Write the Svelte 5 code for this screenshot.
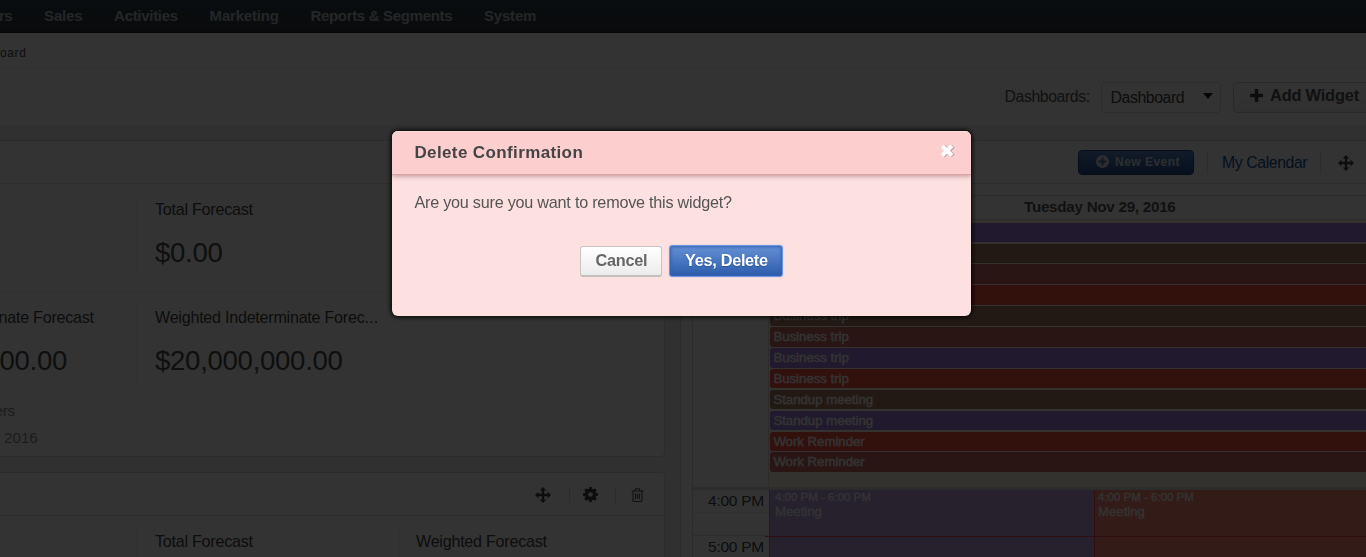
<script>
  const menu = [
    ['Sales', ''],
    ['Activities', 'close'],
    ['Marketing', ''],
    ['Reports & Segments', 'tight'],
    ['System', '']
  ];
  const events = [
    ['purple', ''],
    ['brown', ''],
    ['maroon', ''],
    ['red', ''],
    ['brown', 'Business trip'],
    ['maroon', 'Business trip'],
    ['purple', 'Business trip'],
    ['red', 'Business trip'],
    ['brown', 'Standup meeting'],
    ['purple', 'Standup meeting'],
    ['red', 'Work Reminder'],
    ['maroon', 'Work Reminder']
  ];
</script>

{#snippet move()}
  <svg class="move" viewBox="0 0 16 16" width="16" height="16"><path d="M8 0l3.4 3.5H9.2v3.3h3.3V4.6L16 8l-3.5 3.4V9.2H9.2v3.3h2.2L8 16l-3.4-3.5h2.2V9.2H3.5v2.2L0 8l3.5-3.4v2.2h3.3V3.5H4.6z" /></svg>
{/snippet}

<div class="page">
  <nav>
    <span class="first">rs</span>
    {#each menu as [item, cls]}<span class="item {cls}">{item}</span>{/each}
  </nav>
  <div class="crumb"><span>oard</span></div>
  <header>
    <span class="label">Dashboards:</span>
    <div class="select"><span>Dashboard</span><i></i></div>
    <div class="add">
      <svg viewBox="0 0 12 12" width="13" height="13"><path d="M4.4 0h3.2v4.4H12v3.2H7.6V12H4.4V7.6H0V4.4h4.4z" /></svg>
      <span>Add Widget</span>
    </div>
  </header>
  <main>
    <section class="left">
      <div class="widget one">
        <div class="whead"></div>
        <div class="row r1">
          <div class="cell c1"></div>
          <div class="cell c2"><p>Total Forecast</p><b>$0.00</b></div>
        </div>
        <div class="row r2">
          <div class="cell c1"><p>nate Forecast</p><b>00.00</b></div>
          <div class="cell c2"><p>Weighted Indeterminate Forec<span class="dots">...</span></p><b>$20,000,000.00</b></div>
        </div>
        <div class="meta"><span class="m1">ers</span><span class="m2">2016</span></div>
      </div>
      <div class="widget two">
        <div class="whead tools">
          {@render move()}
          <i class="sep"></i>
          <svg class="gear" viewBox="0 0 14 14" width="15" height="15"><path fill-rule="evenodd" d="M5.8 0h2.4l.3 1.8 1 .4L11 1.1 12.9 3l-1.1 1.5.4 1 1.8.3v2.4l-1.8.3-.4 1 1.1 1.5-1.9 1.9-1.5-1.1-1 .4-.3 1.8H5.8l-.3-1.8-1-.4L3 12.9 1.1 11l1.1-1.5-.4-1L0 8.2V5.8l1.8-.3.4-1L1.1 3 3 1.1l1.5 1.1 1-.4zM7 4.8a2.2 2.2 0 100 4.4 2.2 2.2 0 000-4.4z" /></svg>
          <i class="sep last"></i>
          <svg class="trash" viewBox="0 0 13 14" width="13" height="14"><path d="M.5 3h12M4 3l.7-2.2h3.6L9 3M2 3v9.2q0 1.3 1.2 1.3h6.6q1.2 0 1.2-1.3V3M4.5 5.5v5.5M6.5 5.5v5.5M8.5 5.5v5.5" /></svg>
        </div>
        <div class="row r3">
          <div class="cell c1"></div>
          <div class="cell c2"><p>Total Forecast</p></div>
          <div class="cell c3"><p>Weighted Forecast</p></div>
        </div>
      </div>
    </section>
    <section class="right">
      <div class="chead">
        <div class="new">
          <svg viewBox="0 0 14 14" width="13" height="13"><path fill-rule="evenodd" d="M7 0a7 7 0 100 14A7 7 0 007 0zM6 3h2v3h3v2H8v3H6V8H3V6h3z" /></svg>
          <span>New Event</span>
        </div>
        <i class="sep"></i>
        <span class="link">My Calendar</span>
        <i class="sep s2"></i>
        {@render move()}
      </div>
      <div class="calendar">
        <div class="day"><span>Tuesday Nov 29, 2016</span></div>
        <div class="allday">
          <div class="gutter"></div>
          <div class="events">
            {#each events as [color, title]}
              <div class="event {color}">{title}</div>
            {/each}
          </div>
        </div>
        <div class="slots">
          <div class="times">
            <div class="time"><span>4:00 PM</span></div>
            <div class="time"><span>5:00 PM</span></div>
          </div>
          <div class="timed tp"><small>4:00 PM - 6:00 PM</small><span>Meeting</span></div>
          <div class="timed tr"><small>4:00 PM - 6:00 PM</small><span>Meeting</span></div>
          <div class="now"></div>
        </div>
      </div>
    </section>
  </main>
</div>

<div class="backdrop">
  <div class="dialog">
    <div class="title">
      <span>Delete Confirmation</span>
      <svg viewBox="0 0 18 16" width="18" height="16">
        <path class="shade" d="M4.4 3.2l9.8 9.6M14.2 3.2l-9.8 9.6" />
        <path class="cross" d="M3.2 2.9l9.8 9.6M13 2.9l-9.8 9.6" />
      </svg>
    </div>
    <p>Are you sure you want to remove this widget?</p>
    <div class="actions">
      <button class="cancel">Cancel</button>
      <button class="yes">Yes, Delete</button>
    </div>
  </div>
</div>

<style>
  :global(body) { overflow: hidden; }
  .page, .backdrop { font-family: "Liberation Sans", Arial, sans-serif; }
  .page * , .backdrop * { box-sizing: border-box; }
  .page { width: 1366px; height: 557px; overflow: hidden; background: #fff; color: #444; display: flex; flex-direction: column; white-space: nowrap; }
  p { margin: 0; }
  svg { flex: none; fill: #444; }

  nav { height: 33px; flex: none; display: flex; align-items: center; gap: 31.8px; background: linear-gradient(#2d414b, #323c41 60%, #2a343b); border-bottom: 1px solid #192028; font-weight: bold; font-size: 15px; letter-spacing: -.2px; color: #b4bcc2; padding-bottom: 1px; }
  .close { letter-spacing: -.3px; }
  .tight { letter-spacing: -.32px; }
  .first { width: 12.3px; display: flex; justify-content: flex-end; letter-spacing: -.4px; }
  .crumb { height: 36px; flex: none; background: #fcfcfc; border-bottom: 1px solid #ededed; display: flex; align-items: center; font-size: 12px; letter-spacing: .6px; color: #444; padding-top: 4px; }
  header { height: 56px; flex: none; background: #fdfdfd; display: flex; align-items: center; padding-left: 1004.5px; font-size: 15.8px; letter-spacing: -.4px; }
  .label { width: 96px; flex: none; color: #555; }
  .select { flex: none; width: 120.5px; height: 31px; border: 1px solid #dcdcdc; border-radius: 4px; display: flex; align-items: center; justify-content: space-between; padding: 2px 7px 0 9px; background: #fff; }
  .select i { border: 5.5px solid transparent; border-top: 6px solid #222; border-bottom: 0; margin-bottom: 4px; }
  .add { flex: none; width: 145px; height: 31px; margin-left: 12px; border: 1px solid #ccc; border-radius: 4px; background: linear-gradient(#fff, #f0f0f0); display: flex; align-items: center; gap: 7px; padding: 0 0 3px 16px; font-weight: bold; font-size: 16.4px; letter-spacing: -.2px; color: #555; }

  main { flex: 1; background: #f0f0f0; display: flex; padding-top: 15px; min-height: 0; }
  .left { width: 665px; flex: none; }
  .widget { background: #fff; border: 1px solid #d8d8d8; border-left: 0; }
  .one { height: 317px; border-radius: 0 0 5px 0; }
  .two { height: 110px; margin-top: 15px; border-radius: 0 5px 0 0; }
  .whead { height: 43px; border-bottom: 1px solid #e2e2e2; }
  .row { display: flex; font-size: 16.1px; letter-spacing: -.24px; }
  .r1 { height: 109px; padding-top: 15px; border-bottom: 1px solid #f0f0f0; }
  .r2 { height: 107px; padding-top: 14px; }
  .r3 { height: 60px; padding-top: 15px; }
  .cell { height: 75px; line-height: 20px; }
  .cell b { display: block; font-weight: normal; font-size: 27.6px; letter-spacing: -.3px; line-height: 30px; margin-top: 19px; color: #4a4a4a; }
  .dots { letter-spacing: .1px; }
  .c1 { width: 137px; flex: none; border-right: 1px solid #eee; }
  .r2 .c1 p { width: 93.8px; display: flex; justify-content: flex-end; }
  .r2 .c1 b { width: 67px; display: flex; justify-content: flex-end; }
  .c2 { width: 262px; padding-left: 18px; }
  .c3 { padding-left: 16px; border-left: 1px solid #eee; }
  .meta { color: #888; font-size: 15.2px; line-height: 20px; padding-top: 1px; }
  .meta span { display: block; }
  .m1 { margin-left: -5.5px; letter-spacing: -.2px; }
  .m2 { padding-left: 4px; margin-top: 7px; }
  .tools { display: flex; align-items: center; padding: 1px 0 0 535px; }
  .sep { width: 1px; height: 16px; background: #ddd; }
  .tools .sep { margin-left: 18px; }
  .tools .gear { margin-left: 13px; }
  .tools .last { margin-left: 17px; }
  .trash { margin-left: 15px; fill: none; stroke: #555; stroke-width: 1.1; }

  .right { width: 686px; flex: none; margin-left: 15px; background: #fff; border: 1px solid #d8d8d8; border-right: 0; border-bottom: 0; display: flex; flex-direction: column; }
  .chead { height: 43px; flex: none; border-bottom: 1px solid #ddd; display: flex; align-items: center; padding-left: 397px; padding-top: 1px; }
  .new { width: 116px; height: 25px; border: 1px solid #294570; border-radius: 4px; background: linear-gradient(#5687d1, #284f91); color: #dce6f2; display: flex; align-items: center; gap: 6px; padding: 0 0 3px 17px; font-weight: bold; font-size: 12px; letter-spacing: .48px; }
  .new span { padding-top: 1px; }
  .new svg { fill: #d8e2ee; }
  .chead .sep { height: 22px; margin-left: 13px; }
  .link { font-size: 15.8px; letter-spacing: -.4px; color: #1b4f9c; margin-left: 14px; padding-top: 1px; }
  .chead .s2 { margin-right: 17px; }
  .calendar { margin: 11px 0 0 11px; border: 1px solid #d8d8d8; border-right: 0; border-bottom: 0; flex: 1; }
  .day { height: 24px; border-bottom: 1px solid #ddd; padding-left: 331px; font-size: 15.2px; letter-spacing: -.26px; font-weight: bold; line-height: 22px; color: #555; }
  .allday { display: flex; height: 268px; }
  .gutter { width: 76px; border-right: 1px solid #ddd; }
  .events { flex: 1; background: #fcfae6; display: flex; flex-direction: column; gap: 1.4px; padding: 2.7px 0 0 .6px; }
  .event { height: 19.5px; flex: none; border-radius: 3px 0 0 3px; font-size: 13.2px; line-height: 20.4px; padding-left: 3.8px; color: #fff; -webkit-text-stroke: .4px #fff; }
  .purple { background: #a57de1; }
  .brown { background: #af7d64; }
  .maroon { background: #cd6964; }
  .red { background: #fa503c; }
  .slots { position: relative; display: flex; height: 70px; border-top: 3px solid #dcdcdc; margin-top: -1px; }
  .times { width: 76px; font-size: 15.5px; letter-spacing: -.25px; }
  .time { height: 45.5px; text-align: right; line-height: 22px; border-bottom: 1px solid #ddd; }
  .time span { display: block; padding-right: 5px; border-bottom: 1px dotted #ddd; }
  .timed { color: #fff; display: flex; flex-direction: column; padding: 1px 0 0 5px; font-size: 13.2px; line-height: 15px; -webkit-text-stroke: .3px #fff; }
  .timed small { font-size: 11.5px; line-height: 13px; }
  .tp { width: 325px; background: #c3a5e6; border-left: 1px solid #a57de1; }
  .tr { flex: 1; background: #ff8773; border-left: 1px solid #fa503c; padding-left: 3px; }
  .now { position: absolute; left: 72px; right: 0; top: 46px; height: 1px; background: #e64646; }

  .backdrop { position: fixed; inset: 0; background: rgba(0, 0, 0, .8); display: flex; justify-content: center; align-items: flex-start; padding-top: 131px; }
  .dialog { width: 579px; height: 185px; margin-right: 2.2px; border-radius: 6px; background: #fde0e0; box-shadow: 0 0 5px 1px #000; overflow: hidden; color: #555; }
  .title { height: 43.5px; background: #fccece; border-bottom: 1px solid #dca5a5; box-shadow: 0 1px 5px rgba(110, 50, 50, .45), inset 0 1px #fadada; display: flex; justify-content: space-between; align-items: center; padding: 1px 14px 0 22px; font-size: 17px; font-weight: bold; letter-spacing: .38px; color: #444; }
  .title svg { fill: none; stroke-width: 4; margin-bottom: 4px; }
  .shade { stroke: #b89ba6; }
  .cross { stroke: #fff; }
  .dialog p { font-size: 16.2px; letter-spacing: -.23px; line-height: 20px; padding: 17.5px 22px 0; }
  .actions { display: flex; align-items: center; gap: 7px; padding: 33px 0 0 188px; }
  button { font: bold 16.3px "Liberation Sans", Arial, sans-serif; letter-spacing: -.3px; padding: 0 0 1px; margin: 0; border-radius: 3px; }
  .cancel { width: 82px; height: 31px; color: #666; background: linear-gradient(#fff, #ececec); border: 1px solid #c9c4c4; border-bottom: 2px solid #c4bebe; }
  .yes { width: 114px; height: 32px; padding-bottom: 2px; color: #fff; background: linear-gradient(#6590d5, #2b5bab); border: 1px solid #6e95e6; box-shadow: inset 0 0 3px 1px #3560ad, 0 0 1px #6e95e6; text-shadow: 0 1px 1px #2b559b; }
</style>
